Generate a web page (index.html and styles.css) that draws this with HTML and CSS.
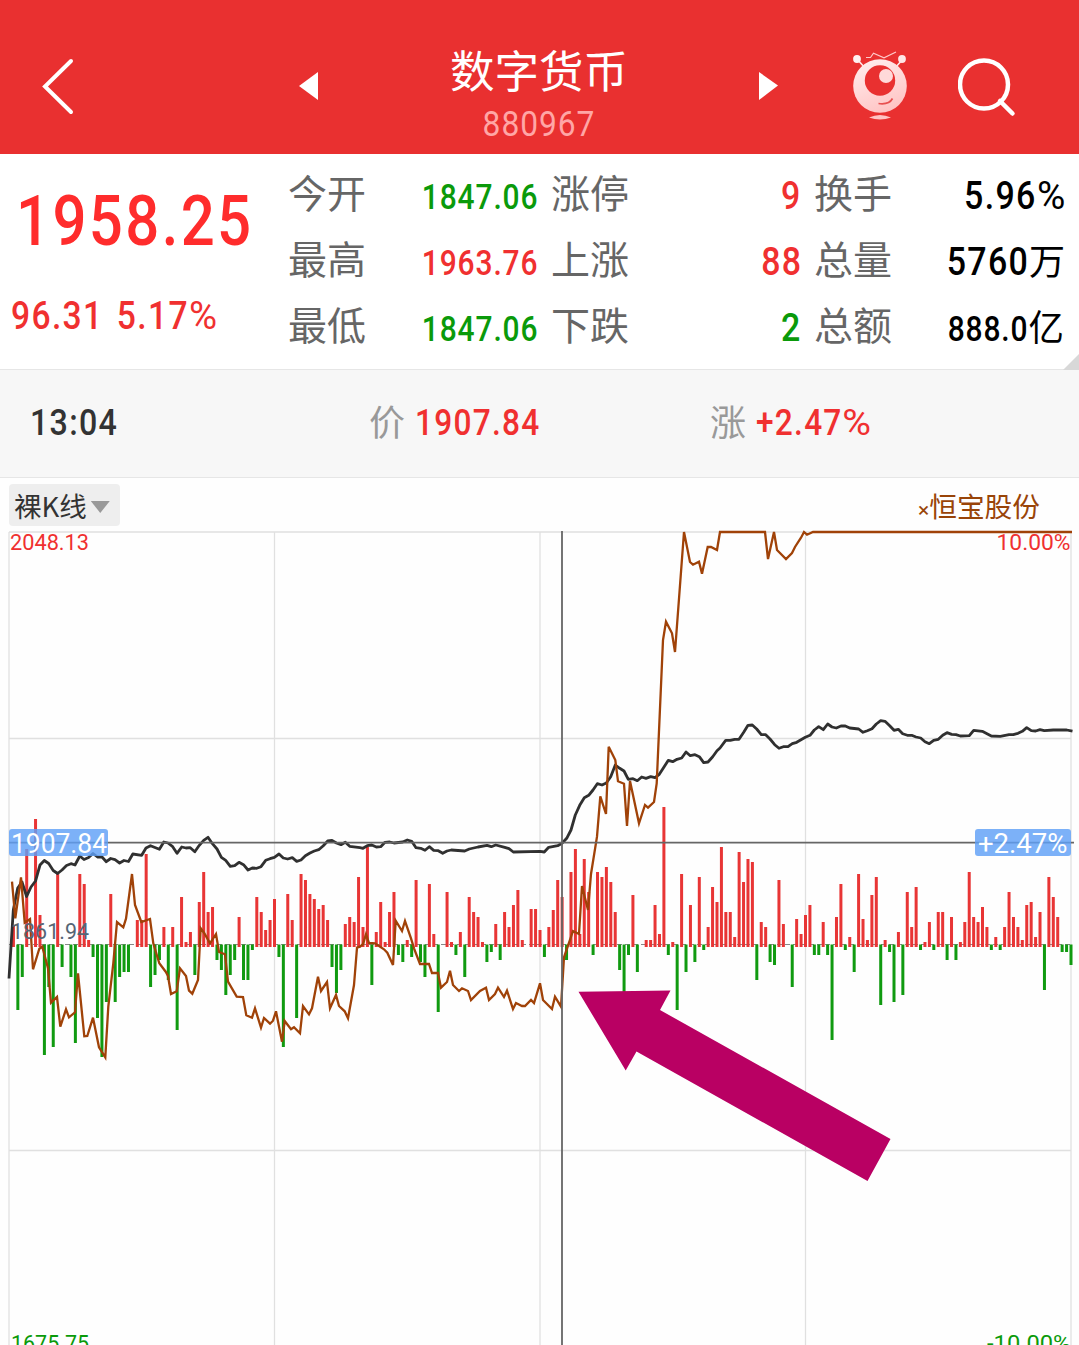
FILE: index.html
```html
<!DOCTYPE html>
<html lang="zh-CN">
<head>
<meta charset="utf-8">
<title>数字货币 880967</title>
<link rel="stylesheet" href="styles.css">
</head>
<body>
<header class="topbar">
  <svg class="back" viewBox="0 0 34 58"><path d="M31 4 5 29.500 31 55"/></svg>
  <svg class="step prev" viewBox="0 0 20 30"><path d="M19 1V29L0 15Z"/></svg>
  <div class="heading">
    <h1 class="name">数字货币</h1>
    <div class="code num">880967</div>
  </div>
  <svg class="step next" viewBox="0 0 20 30"><path d="M0 1V29L19 14.500Z"/></svg>
  <svg class="robot" viewBox="0 0 56 70">
    <defs><linearGradient id="skin" x1="0.2" y1="0" x2="0.6" y2="1"><stop offset="0" stop-color="#ffeded"/><stop offset="1" stop-color="#ffc4c4"/></linearGradient></defs>
    <path d="M5 8 13 17M51 8 43 17" stroke="#ffe6e6" stroke-width="1.600"/>
    <circle cx="5" cy="8" r="3.900" fill="#fff0f0"/><circle cx="50" cy="8" r="3.900" fill="#ffe6e6"/>
    <path d="M14 6.500H18.500L21.500 2.200 32 6.800 44 1" fill="none" stroke="#ffc9c9" stroke-width="1.200"/>
    <circle cx="28" cy="35" r="26.800" fill="url(#skin)"/>
    <circle cx="28" cy="29.500" r="15.200" fill="#e93030"/>
    <circle cx="34" cy="25" r="7" fill="#ffd9d9"/>
    <path d="M26.500 52.500Q37 54 40.500 47.500" fill="none" stroke="#e85050" stroke-width="1.700"/>
    <path d="M17 66.500Q28 61.500 39 66.500 28 70.500 17 66.500Z" fill="#ffc4c4"/>
  </svg>
  <svg class="search" viewBox="0 0 58 60"><circle cx="26" cy="26.500" r="24"/><path d="M42 43 54.500 55.500"/></svg>
</header>

<section class="quote">
  <div class="last">
    <div class="price num">1958.25</div>
    <div class="change num">96.31 5.17<span class="pct">%</span></div>
  </div>
  <dl class="stats">
    <div><dt>今开</dt><dd class="num mid down">1847.06</dd></div>
    <div><dt>涨停</dt><dd class="num up">9</dd></div>
    <div><dt>换手</dt><dd class="num">5.96<span class="pct">%</span></dd></div>
    <div><dt>最高</dt><dd class="num mid up">1963.76</dd></div>
    <div><dt>上涨</dt><dd class="num up">88</dd></div>
    <div><dt>总量</dt><dd class="num">5760<span class="unit">万</span></dd></div>
    <div><dt>最低</dt><dd class="num mid down">1847.06</dd></div>
    <div><dt>下跌</dt><dd class="num down">2</dd></div>
    <div><dt>总额</dt><dd class="num mid">888.0<span class="unit">亿</span></dd></div>
  </dl>
  <i class="corner"></i>
</section>

<section class="cursor">
  <div class="time"><span class="num">13:04</span></div>
  <div class="at"><span class="tag">价</span><span class="num up">1907.84</span></div>
  <div class="at"><span class="tag">涨</span><span class="num up">+2.47<span class="pct">%</span></span></div>
</section>

<div class="tools">
  <button class="kline">裸K线<i class="caret"></i></button>
  <div class="overlay"><span class="x">×</span>恒宝股份</div>
</div>

<svg class="chart" viewBox="0 528 1079 817">
  <path class="grid" d="M9 532H1071M9 738.500H1071M9 1150.500H1071M9 532V1345M274.500 532V1345M540 532V1345M805.500 532V1345M1071 532V1345"/>
  <path class="axis" d="M9 944.500H1071"/>
  <g id="bars"></g>
  <polyline id="index" class="index"/>
  <polyline id="stock" class="stock"/>
  <path class="cross" d="M562 531V1345M9 842.700H1074"/>
  <rect class="badge" x="9" y="829" width="99" height="27" rx="3"/>
  <rect class="badge" x="975" y="829" width="96" height="27" rx="3"/>
  <g class="axis-text">
    <text class="up" x="10" y="550" textLength="79" lengthAdjust="spacingAndGlyphs">2048.13</text>
    <text class="up" x="996.500" y="550" textLength="74" lengthAdjust="spacingAndGlyphs">10.00%</text>
    <text class="mid-price" x="11" y="939" textLength="78" lengthAdjust="spacingAndGlyphs">1861.94</text>
    <text class="down" x="11" y="1350.500" textLength="78" lengthAdjust="spacingAndGlyphs">1675.75</text>
    <text class="down" x="987" y="1350.500" textLength="83.500" lengthAdjust="spacingAndGlyphs">-10.00%</text>
    <text class="on-badge" x="11" y="853" textLength="96" lengthAdjust="spacingAndGlyphs">1907.84</text>
    <text class="on-badge" x="978" y="853" textLength="89.500" lengthAdjust="spacingAndGlyphs">+2.47%</text>
  </g>
  <path class="arrow" d="M578.500 991.700 670.500 990.500 660 1010 890.500 1139 867.500 1181 636.500 1051.500 625.700 1070.500Z"/>
</svg>
<script src="chart.js"></script>
</body>
</html>
```
FILE: styles.css
```css
* { box-sizing: border-box; margin: 0; padding: 0; }

body {
  width: 1079px;
  height: 1345px;
  overflow: hidden;
  background: #fefefe;
  font-family: "Noto Sans CJK SC", sans-serif;
  color: #000;
}

.num {
  font-family: Roboto, "Noto Sans CJK SC", sans-serif;
  font-weight: 500;
  letter-spacing: .04em;
  white-space: nowrap;
  transform: scaleX(.87);
  transform-origin: left;
  display: inline-block;
}
.pct {
  display: inline-block;
  font-weight: 400;
  transform: scaleX(1.14);
  transform-origin: left;
  margin-right: .05em;
}

.up { color: #f03030; }
.down { color: #0a9a0a; }

.topbar {
  height: 154px;
  background: #e93030;
  display: flex;
  align-items: flex-start;
}
.back { width: 34px; height: 58px; margin: 57px 0 0 40px; }
.back path { fill: none; stroke: #fff; stroke-width: 4; stroke-linecap: round; }
.step { width: 20px; height: 30px; margin-top: 71px; fill: #fff; }
.prev { margin-left: 225px; }
.heading { width: 440px; padding-top: 36px; text-align: center; }
.name { font-size: 44.500px; line-height: 66px; font-weight: 400; color: #fff; }
.code {
  font-size: 34.500px; line-height: 44px; font-weight: 400; color: #ffa6a6;
  transform: scaleX(.92);
  transform-origin: center; display: block; letter-spacing: .03em;
}
.robot { width: 56px; height: 70px; margin: 51px 0 0 73px; }
.search { width: 58px; height: 60px; margin: 58px 0 0 50px; }
.search * { fill: none; stroke: #fff; stroke-width: 4.500; stroke-linecap: round; }

.quote {
  height: 215px;
  position: relative;
  display: grid;
  grid-template-columns: 289px 1fr;
  background: #fff;
}
.last { color: #ff2c2c; display: flex; flex-direction: column; align-items: flex-start; }
.price { font-size: 70px; line-height: 82px; margin: 26px 0 0 16px; transform: scaleX(.855); }
.change { font-size: 38px; line-height: 44px; margin: 32px 0 0 11px; color: #f03030; word-spacing: 4px; transform: scaleX(.885); }
.stats {
  display: grid;
  grid-template-columns: repeat(3, 249px);
  grid-auto-rows: 66px;
  column-gap: 14px;
  padding-top: 5px;
}
.stats div { display: flex; justify-content: space-between; align-items: baseline; line-height: 66px; }
.stats dt { font-size: 39px; color: #666; margin-left: -1px; position: relative; top: -1px; }
.stats dd { font-size: 39px; transform-origin: right; margin-right: -1px; }
.stats .mid { font-size: 35px; letter-spacing: .03em; transform: scaleX(.855); margin-right: 0; }
.unit { font-size: 36px; display: inline-block; transform: scaleX(1.15); transform-origin: right; letter-spacing: 0; font-weight: 400; margin-left: 5px; }
.corner {
  position: absolute; right: 0; bottom: -1px;
  width: 16px; height: 16px;
  background: #d8d8d8; clip-path: polygon(100% 0, 100% 100%, 0 100%);
}

.cursor {
  height: 109px;
  background: #f7f7f7;
  border-top: 1px solid #e6e6e6;
  border-bottom: 1px solid #e6e6e6;
  display: grid;
  grid-template-columns: 339px 341px 1fr;
  padding-left: 30px;
  line-height: 98px;
  font-size: 37px;
}
.time { color: #333; line-height: 98px; }
.at { display: flex; align-items: baseline; gap: 10px; }
.at .num { transform: scaleX(.855); }
.at .num .pct { transform: scaleX(1.24); }
.tag { font-size: 36px; color: #999; position: relative; top: 1px; }

.tools {
  height: 50px;
  padding: 6px 39px 0 9px;
  display: flex;
  justify-content: space-between;
}
.kline {
  width: 111px; height: 42px;
  border: 0; border-radius: 4px;
  background: #eee; color: #333;
  font: 27.500px/42px "Noto Sans CJK SC", sans-serif;
  display: flex; align-items: center; gap: 4px;
  padding-left: 5px;
}
.caret { width: 19px; height: 12px; margin-top: 4px; background: #999; clip-path: polygon(0 0, 100% 0, 50% 100%); }
.overlay { font-size: 27.700px; line-height: 42px; color: #994408; }
.overlay .x { font: 21px/1 Roboto, sans-serif; }

.chart { display: block; width: 1079px; height: 817px; }
.grid { fill: none; stroke: #e0e0e0; stroke-width: 1.300; }
.axis { stroke: #888; stroke-width: 1; stroke-dasharray: 5 3; }
.bar-up { stroke: #e83535; stroke-width: 3; }
.bar-down { stroke: #109a10; stroke-width: 3; }
.index { fill: none; stroke: #303030; stroke-width: 2.800; stroke-linejoin: round; }
.stock { fill: none; stroke: #a04208; stroke-width: 2.300; }
.cross { stroke: #666; stroke-width: 1.800; }
.badge { fill: rgba(95, 160, 246, .82); }
.axis-text { font: 400 22.500px Roboto, sans-serif; }
.axis-text .up { fill: #f03030; }
.axis-text .down { fill: #0a9a0a; }
.mid-price { fill: #566575; }
.on-badge { fill: #fff; font-size: 27px; }
.arrow { fill: #b90063; }
```
FILE: chart.js
```javascript
// One entry per minute: the y at which the bar ends, 0 for no bar.
const bars = [
  0,925,1010,977,849,0,819,915,1055,987,1047,874,967,0,977,1043,874,884,940,957,
  1018,1057,1002,894,1002,977,972,972,0,920,920,854,987,975,960,927,980,927,1030,897,
  942,932,975,902,872,912,907,960,970,995,975,960,917,980,980,950,897,912,930,920,
  899,957,1047,894,920,1018,874,880,894,899,909,905,920,967,993,970,924,917,922,877,
  927,847,985,932,902,942,912,892,955,962,940,957,880,962,977,884,934,1012,0,892,
  942,955,932,977,897,912,917,942,962,952,924,960,912,927,905,890,940,0,909,909,
  930,957,927,910,880,897,960,872,849,934,859,892,955,872,877,867,882,912,970,992,
  955,895,972,0,940,940,905,934,807,955,942,1010,874,972,905,962,877,950,927,887,
  902,847,912,912,937,852,882,859,862,980,922,927,962,965,880,924,0,987,919,934,
  915,905,955,955,922,955,1040,917,884,950,937,972,874,919,940,895,877,1005,940,952,
  1002,932,995,892,927,887,950,942,922,950,912,912,960,917,960,942,922,872,917,922,
  907,927,950,937,950,927,892,917,927,940,905,902,937,912,990,877,897,917,952,952,965
];
const left = 9, step = 4.425;
let up = "", down = "";
bars.forEach((y, i) => {
  if (!y) return;
  const x = (left + step * i).toFixed(2);
  if (y < 945) up += `M${x} 947V${y}`;
  else down += `M${x} 944.500V${y}`;
});
document.getElementById("bars").innerHTML =
  `<path class="bar-up" d="${up}"/><path class="bar-down" d="${down}"/>`;

document.getElementById("index").setAttribute("points", `
9,978.5 13.3,910 17.7,888 22,882 26.6,896.5 31,887 35.5,881 40,865 44.3,860.5 48.7,863.5
53.2,870.5 57.6,873.5 62,870 66.5,865.5 71,863.7 75,865 79.8,856 84,859.5 88.6,857.5 93,853.5
97.5,857 102,857 106.3,861.7 110.7,858.5 115,859.7 119.6,863 124,860.5 128.5,861.5 132.8,854 141.7,855.3
146,848 150.5,845.7 159.4,849.3 163.8,842 168,843 172.7,846.7 177,853.3 181.7,847 186,848 190.3,847.7
194.8,851.7 199.3,845.3 203.7,840.3 208,837.3 212.4,843.7 217,849 221.4,857.3 225.7,860.3 230.3,866.3 234.7,865.7
239,862.3 243.5,864.7 248,870 252.3,868 256.7,868.3 261,866.7 265.7,860.3 270,858.7 274.4,857.3 279,854
283.3,858 287.7,859 292.3,857.7 296.7,861.3 301,860 305.4,855.7 310,853 314.3,851 318.7,849.7 323.3,845.7
327.7,841 332,840.4 336.4,843 341,844.7 345.3,842.3 349.7,846.3 360,847.7 363,848.3 367.3,845.7 371.8,845
376.3,847 380.7,846.7 385,842.3 389.7,842 394,843 402.7,842 407.3,840 411.7,841.3 416,847.7 420.7,848.3
425,850.3 429.3,846.7 433.7,850.3 438.3,850.7 442.7,853.3 447,851 451.3,850 464.7,851 469.3,849 478,847
487,845.3 491.3,846.7 495.7,845 504.7,847.3 509,848.7 513.3,852 540,851.3 544.3,852 548.7,847.3 557.7,845.7
562,843.3 566.7,838.3 571,830 575.3,815 579.7,805.3 584.3,797.7 588.7,795.3 593,790 597.3,783.7 602,785
606.3,783 610.7,776.7 615.3,765 619.7,768.3 624,771 628.3,779.3 633,778.7 637.3,780.7 641.7,777 646,778.3
650.7,776.7 655,777.7 659.3,774.3 664,767 668.3,760.3 672.7,761.7 677,759.3 681.7,758 686,752 690.3,755.7
695,754.7 699.3,756.7 703.7,762.7 708,762 712.7,756.7 717,750.7 720,748 725.7,740.3 730.3,740.3 734.7,739.3
739,739.3 743.7,732.3 748,725.3 752.3,725 756.7,729 761.3,734.7 765.7,734.7 770,739 774.7,744.7 779,748.3
783.3,746.7 788,746.7 792.3,743.7 796.7,742.3 805.3,737.3 810,735.3 814.3,730 818.7,726.7 823.3,729.7 827.7,724
832,727 836.3,728 841,726 845.3,726 849.7,728 858.7,729 863,732.3 867.3,730.7 872,728.7 876.3,724
880.7,720.7 885,721.3 889.7,725.7 894,730.3 898.3,729.3 902.7,733.7 907.3,735.3 911.7,735.3 916,737 920.7,738
925,741.7 929.3,743.7 933.7,740.3 938.3,739.3 942.7,735.3 947,732.7 951.7,734.3 956,734.7 960.3,736 969.3,735.7
973.7,730.3 982.3,731.3 987,733.7 991.3,736 1000.3,736.3 1009,734.7 1013.3,734.7 1018,733.3 1022.3,731.3 1026.7,727.7
1031.3,730.7 1035.7,731 1040,729.7 1044.3,730.7 1053.3,730 1066.7,730 1072.5,731.2`);

document.getElementById("stock").setAttribute("points", `
12,881.7 15.3,918.3 21,877.3 24.7,922.7 30,919 33,969.3 39.3,948.7 42.3,946.7 48,968.3 51,1002.7
57,997 60.3,1026.7 66,1009.3 69,1017.3 75,1012.3 78,973.3 84.3,1036.3 87.3,1036 93,1017.7 99,1047.3
105.3,1057.3 108.3,1006.7 113.3,963.3 117,922 123.3,927.3 126,918.7 132,874 135,905 141.3,922 150,919
153.3,943.3 159.3,963.3 165.7,971.7 168,976 171,994 176.7,991.3 180,968.3 186,976 189,990.7 192.3,993.7
198,980 200.7,928.3 204,932.7 210,943.3 216,934 219,952 225,954.3 228,981.7 236.7,996.7 243,997
246.3,1015.3 252,1017.7 255,1008.3 261,1027.7 264,1018 270,1023.7 273,1020.7 276,1011.3 282,1041.7 284.7,1021
291,1029.3 294,1027.3 300,1033.3 303,1006 309,1014.3 312,1008.3 318,976.7 321,991 327,982 330,1008.3
336,995 339,1006 344.7,1011.3 348,1018.3 354,985 357,947.7 360,946.7 363,944 366,934.3 369,943
375,943.3 384,949.3 387.3,952.7 393,965 395.7,920.7 402,931 405,921 411,938.3 414,948.3 420,964
429,964 432,973 438,973 441,987.7 447,982 450,970.7 453,985 459,991 462,988.3 468,991
471,1000 480,991 486,987.7 489,1000 495,994 498,987.7 504,997 507,990.7 513,1009 516,1003
522,1006 525,1006 531,1000 534,1003 540,983.3 543,1000 552,1009 555,996.7 561,1006.7 564,957.3
573,931 579,934 582,886 588,910 591,874 597,836.7 600.3,796.3 606,814 608.7,746.7 615.3,760
618,781.3 624,783.7 627,826 630,781 639,823.3 645,805 648,807.7 654,802 656.7,783.3 657,776.7
663,640 666,621.7 672,633.3 675,652 684,532 690,562 693,564.7 699,561.7 702,573.7 707.7,547
711,547 717,550 720,532 765,532 768,559 774,532 777,550 786,559 792,553 795,547
801,537.7 804,532 807,534.7 813,532 1072,532`);
```
